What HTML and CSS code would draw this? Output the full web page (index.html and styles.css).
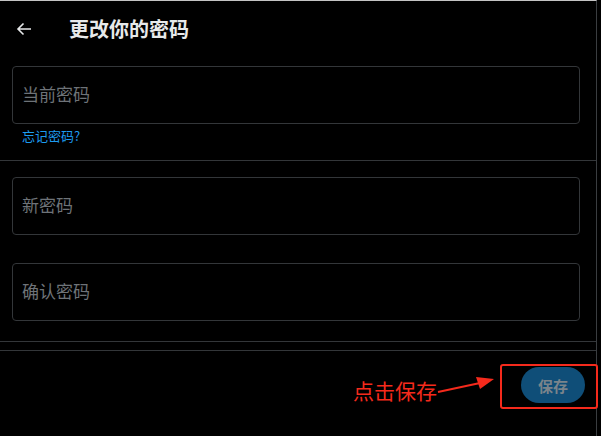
FILE: index.html
```html
<!DOCTYPE html>
<html lang="zh-CN">
<head>
  <meta charset="UTF-8" />
  <meta name="viewport" content="width=device-width, initial-scale=1.0"/>
  <title>更改你的密码</title>
  <link rel="stylesheet" href="styles.css">
</head>
<body>

  <div class="frame">
    <div class="header">
      <svg class="back" width="16" height="16" viewBox="0 0 16 16">
        <path d="M15 8H2M7.5 2.5L2 8l5.5 5.5" fill="none" stroke="#e7e9ea" stroke-width="1.6"/>
      </svg>
      <h1 class="title">更改你的密码</h1>
    </div>

    <div class="section first">
      <input class="field" type="password" placeholder="当前密码">
      <a class="forgot" href="#">忘记密码?</a>
    </div>

    <div class="section second">
      <input class="field" type="password" placeholder="新密码">
      <input class="field" type="password" placeholder="确认密码">
    </div>

    <div class="footer">
      <button class="save" disabled>保存</button>
    </div>
  </div>

  <!-- annotation on top of the screenshot -->
  <div class="note-box"></div>
  <div class="note-text">点击保存</div>
  <svg class="note-arrow" width="62" height="24" viewBox="0 0 62 24">
    <path d="M2 19L44 10" stroke="#f52a1c" stroke-width="2" fill="none"/>
    <path d="M58 6L40 4L44 16Z" fill="#f52a1c"/>
  </svg>

</body>
</html>
```

FILE: styles.css
```css
body {
  margin: 0;
  background: #000;
  font-family: "Noto Sans CJK SC", "Noto Sans", sans-serif;
  color: #e7e9ea;
}

.frame {
  width: 596px;
  height: 435px;
  border-top: 1px solid #c4c4c4;
  border-right: 1px solid #3a3d40;
}

.header {
  height: 56px;
  display: flex;
  align-items: center;
  padding-left: 16px;
}

.back {
  display: block;
}

.title {
  margin: 0 0 0 37px;
  font-size: 20px;
  font-weight: 700;
  line-height: 24px;
}

.section {
  padding: 0 16px 0 12px;
  display: flex;
  flex-direction: column;
  border-bottom: 1px solid #333639;
}

.section.first {
  padding-top: 9px;
  padding-bottom: 16px;
}

.section.second {
  padding-top: 16px;
  padding-bottom: 20px;
  gap: 28px;
}

.field {
  height: 58px;
  box-sizing: border-box;
  border: 1px solid #333639;
  border-radius: 4px;
  background: transparent;
  padding: 0 9px 3px;
  font-family: inherit;
  font-size: 17px;
  color: #e7e9ea;
  outline: none;
}

.field::placeholder {
  color: #6e7378;
}

.forgot {
  margin: 4px 0 0 10px;
  font-size: 13px;
  line-height: 16px;
  color: #1d9bf0;
  text-decoration: none;
}

.footer {
  margin-top: 8px;
  border-top: 1px solid #333639;
  display: flex;
  justify-content: flex-end;
  padding: 16px 11px 0 0;
}

.save {
  width: 64px;
  height: 36px;
  border: none;
  border-radius: 18px;
  background: #0f4e78;
  color: #7a848b;
  font-family: inherit;
  font-size: 15px;
  font-weight: 700;
}

.note-box {
  position: absolute;
  left: 500px;
  top: 364px;
  width: 94px;
  height: 41px;
  border: 2px solid #f52a1c;
  border-radius: 3px;
}

.note-text {
  position: absolute;
  left: 353px;
  top: 377px;
  font-size: 21px;
  line-height: 27px;
  color: #f52a1c;
}

.note-arrow {
  position: absolute;
  left: 436px;
  top: 373px;
}
```
